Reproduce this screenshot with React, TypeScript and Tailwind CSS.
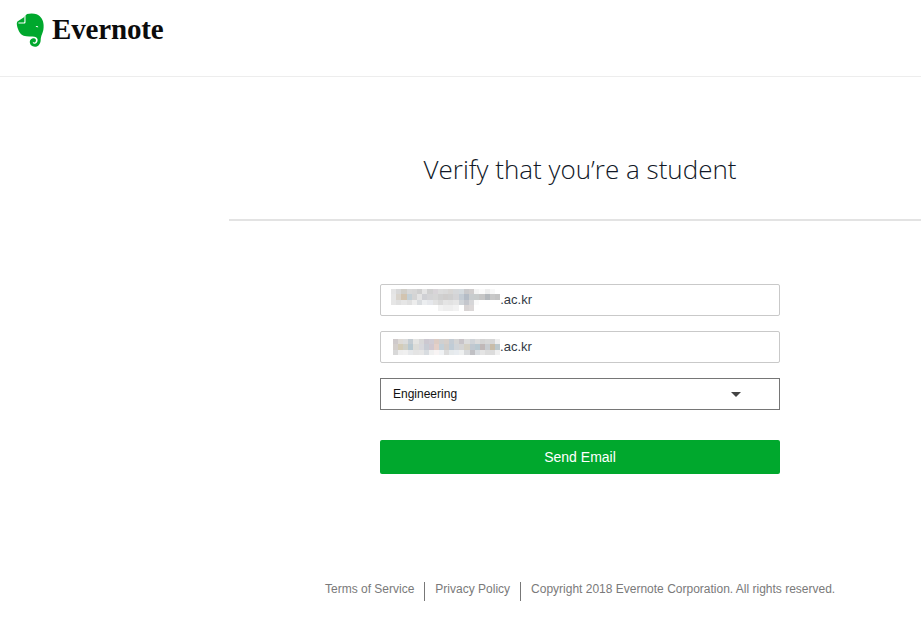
import React from 'react';

const blurOne = [
  ['#e4e4e4', '#d8d8d8', '#d0cec8', '#d8d8d8', '#d6d6d6', '#cfcfcf', '#e4e4e4', '#d0d0d0', '#d8d4d8', '#dcdcdc', '#dadada', '#d8d6d4', '#d6d8da', '#d4dade', '#c9c9cb', '#d0cdcd', '#f4f4f4', '#fafafa', '#eeeeee', '#f8f8f8', '#ffffff'],
  ['#e6e6e6', '#d9d4cc', '#d2c4b0', '#c4d0d6', '#d4d4d4', '#e4e4e4', '#cfd0d4', '#d4d4d6', '#d6d6d6', '#d0d0d0', '#cfcdcc', '#cfcfcf', '#d4d4d6', '#c4ccd4', '#b4bcc6', '#c8ccce', '#c8cccc', '#c6c6c6', '#b4b8bc', '#c8c8c8', '#c4c4c4'],
  ['#e6e6e6', '#e0e0e0', '#e6e6e6', '#e0e0e0', '#ededed', '#dadde0', '#eceef0', '#e6e8ec', '#e2e2e2', '#dadada', '#e4e4e4', '#e2e2e2', '#e6e6e6', '#d0d4d8', '#c4c6cc', '#d6d6d8', '#fafafa', '#ffffff', '#ffffff', '#ffffff', '#ffffff'],
  ['#ffffff', '#ffffff', '#ffffff', '#ffffff', '#ffffff', '#ffffff', '#ffffff', '#ffffff', '#ffffff', '#f2f2f2', '#eeeeee', '#eeeeee', '#f2f2f2', '#ffffff', '#d8d4d4', '#dcd8d8', '#ffffff', '#ffffff', '#ffffff', '#ffffff', '#ffffff'],
];

const blurTwo = [
  ['#cfcacb', '#dedad6', '#dcdcdc', '#c4ccd2', '#e4e4e2', '#d8d8d8', '#ccc8d0', '#d0ccd4', '#dcccc4', '#d0d0d0', '#d6cfca', '#c4ccd4', '#d4d4d4', '#c8c4c8', '#dcdcdc', '#d0d4d8', '#dcdcdc', '#d4d4d4', '#d8d8d8', '#d6d6d6', '#eeeeee'],
  ['#d4cfcc', '#d4ccb8', '#d0d0c8', '#b8c8d0', '#dcdcd8', '#d8d8dc', '#c8ccd4', '#d0c8d0', '#e4d0c8', '#c4d0d8', '#d0ccc8', '#c0ccd6', '#d0d4d8', '#d4d4d4', '#d4d0c4', '#c0c8d0', '#b8c8d0', '#c0b8b8', '#c8ccd0', '#c8bca8', '#bcc8cc'],
  ['#d8d8d8', '#eeeeee', '#f0f0f0', '#e6e8ea', '#e4e4e4', '#e6e6e6', '#d8dce0', '#f0f0f0', '#f8f4f4', '#f0f2f4', '#dcdcdc', '#e6eaec', '#e8ecf0', '#eef0f0', '#d8dadc', '#c0c0c4', '#d8dce0', '#e4e4e4', '#dcdcdc', '#dcdcdc', '#f0f0f0'],
];

const Pixelated = ({ rows, size }: { rows: string[][]; size: number }) => (
  <svg width={rows[0].length * size} height={rows.length * 5.33} className="block shrink-0" shapeRendering="crispEdges">
    {rows.map((row, y) =>
      row.map((fill, x) => <rect key={`${x}-${y}`} x={x * size} y={y * 5.33} width={size + 0.5} height={5.83} fill={fill} />)
    )}
  </svg>
);

const Logo = () => (
  <svg width="30" height="35" viewBox="0 0 30 35" className="block shrink-0">
    <path
      fill="#00a82d"
      d="M7.6 4.4 L11 1 C14 .2 18 .2 20.6 1.2 C25 3 27.4 7 27.6 12 C27.8 15.5 27.2 18.5 26 21.2 C25.2 23 24.8 24.5 24.7 27 C24.5 30.8 22.4 33.8 19 33.8 C15.8 33.8 13.6 31.4 13.8 28.6 C14 26.2 16.2 24.8 18.2 25.3 C20 25.8 20.6 27.8 19.4 29 C18.5 29.9 17.2 29.6 16.8 28.8 C16.6 30.2 17.8 31 19 30.8 C20.8 30.5 21.8 28.6 21.6 26.6 C21.3 24.4 19.4 23.4 16.4 23.4 C13.2 23.4 10.2 23.6 7.6 22.8 C5 21.8 3 19 2 16 C1.2 14.2 .8 12 .8 10 L1.4 8.6 Z"
    />
    <path fill="#ffffff" d="M8.4 3.4 L8.4 8.6 C8.4 9.2 8 9.6 7.4 9.6 L2.4 9.6 L2.4 10.6 L8 10.6 C9 10.6 9.5 10 9.5 9 L9.5 2.4 Z" />
    <path fill="#ffffff" d="M19.6 13.2 C20.6 12.6 21.8 13 22.4 14.2 C21.2 14.6 20.2 14.2 19.6 13.2 Z" />
  </svg>
);

const App: React.FC = () => {
  return (
    <div className="min-h-[630px] bg-white font-['Liberation_Sans',Arial,sans-serif]">
      <header className="flex h-[77px] items-start gap-[6px] border-b border-[#ededed] pl-[16px] pt-[13px]">
        <Logo />
        <span className="mt-[-1px] font-['Liberation_Serif',serif] text-[29px] font-bold leading-[34px] tracking-[-0.15px] text-[#0c0c0c]">
          Evernote
        </span>
      </header>

      <main className="ml-[229px]">
        <div className="flex h-[144px] items-start justify-center border-b-2 border-[#e3e3e3] pl-[10px] pt-[72px]">
          <h1 className="font-['Open_Sans',sans-serif] text-[26px] font-light leading-[40px] text-[#111827]">
            Verify that you’re a student
          </h1>
        </div>

        <form className="ml-[151px] mt-[63px] flex w-[400px] flex-col">
          <div className="flex h-[32px] items-center rounded-[2px] border border-[#c9c9c9] pl-[10px] text-[13px] text-[#333a45]">
            <Pixelated rows={blurOne} size={5.2} />
            <span>.ac.kr</span>
          </div>
          <div className="mt-[15px] flex h-[32px] items-center rounded-[2px] border border-[#c9c9c9] pl-[12px] text-[13px] text-[#333a45]">
            <Pixelated rows={blurTwo} size={5.1} />
            <span>.ac.kr</span>
          </div>
          <div className="mt-[15px] flex h-[32px] items-center justify-between border border-[#767676] pl-[12px] pr-[38px] text-[12px] text-[#111111]">
            <span>Engineering</span>
            <span className="h-0 w-0 border-x-[5px] border-t-[5px] border-x-transparent border-t-[#444444]" />
          </div>
          <button
            type="button"
            className="mt-[30px] flex h-[34px] items-center justify-center rounded-[2px] bg-[#00a82d] text-[14px] text-white"
          >
            Send Email
          </button>
        </form>

        <footer className="ml-[96px] mt-[108px] flex items-start text-[12px] leading-[14px] text-[#7a7a7a]">
          <span className="pr-[10px]">Terms of Service</span>
          <span className="h-[19px] border-l border-[#777777] pl-[10px]">Privacy Policy</span>
          <span className="ml-[10px] h-[19px] border-l border-[#777777] pl-[10px]">
            Copyright 2018 Evernote Corporation. All rights reserved.
          </span>
        </footer>
      </main>
    </div>
  );
};

export default App;
